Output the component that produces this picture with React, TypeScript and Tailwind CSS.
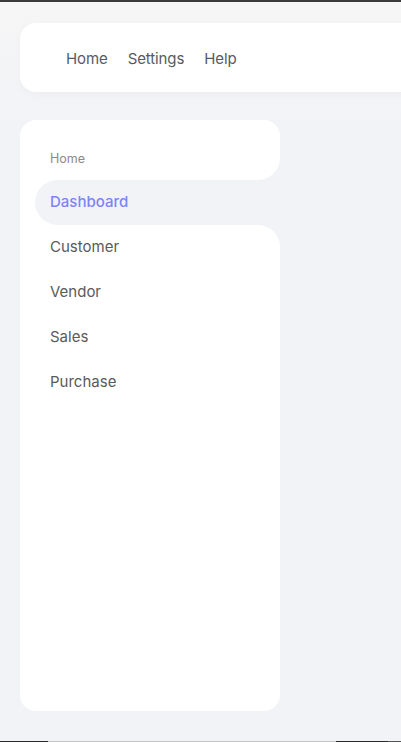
const topLinks = ["Home", "Settings", "Help"];
const menu = ["Customer", "Vendor", "Sales", "Purchase"];

export default function App() {
  return (
    <div
      className="flex h-[742px] w-full flex-col overflow-hidden bg-[#f2f3f7]"
      style={{ fontFamily: "Inter, 'Noto Sans', sans-serif" }}
    >
      {/* barre du haut */}
      <div className="h-[2px] w-full bg-[#3a3a3a]" />

      <div className="flex-1 bg-gradient-to-b from-[#f6f6f6] to-[#f2f3f7] to-[120px] pt-[21px]">
        {/* Header */}
        <header className="ml-[20px] -mr-[30px] flex h-[69px] items-center rounded-2xl bg-white pl-[36px] pt-[4px] shadow-[0_2px_10px_rgba(0,0,0,0.03)]">
          <nav className="flex items-center">
            {topLinks.map((link) => (
              <a key={link} className="px-[10px] text-[15px] tracking-[-0.1px] text-[#555b63]">
                {link}
              </a>
            ))}
          </nav>
        </header>

        {/* Sidebar */}
        <aside className="ml-[20px] mt-[28px] flex h-[591px] w-[260px] flex-col">
          <div className="flex h-[60px] items-center rounded-t-2xl rounded-br-[22px] bg-white pl-[30px] pt-[19px]">
            <span className="text-[12.5px] text-[#8a8a8a]">Home</span>
          </div>
          <div className="bg-white pl-[15px]">
            <div className="flex h-[45px] items-center rounded-l-full bg-[#f2f3f7] pl-[15px]">
              <span className="text-[15px] font-medium text-[#7d84f6]">Dashboard</span>
            </div>
          </div>
          <ul className="flex-1 rounded-b-2xl rounded-tr-[22px] bg-white">
            {menu.map((item) => (
              <li key={item} className="flex h-[45px] items-center pl-[30px] text-[15px] text-[#5a5a5a]">
                {item}
              </li>
            ))}
          </ul>
        </aside>
      </div>

      {/* barre du bas */}
      <div className="flex h-[1px] w-full">
        <div className="w-[48px] bg-[#2b2b2b]" />
        <div className="w-[288px] bg-[#c4c4c4]" />
        <div className="w-[52px] bg-[#2b2b2b]" />
        <div className="flex-1 bg-[#555555]" />
      </div>
    </div>
  );
}
